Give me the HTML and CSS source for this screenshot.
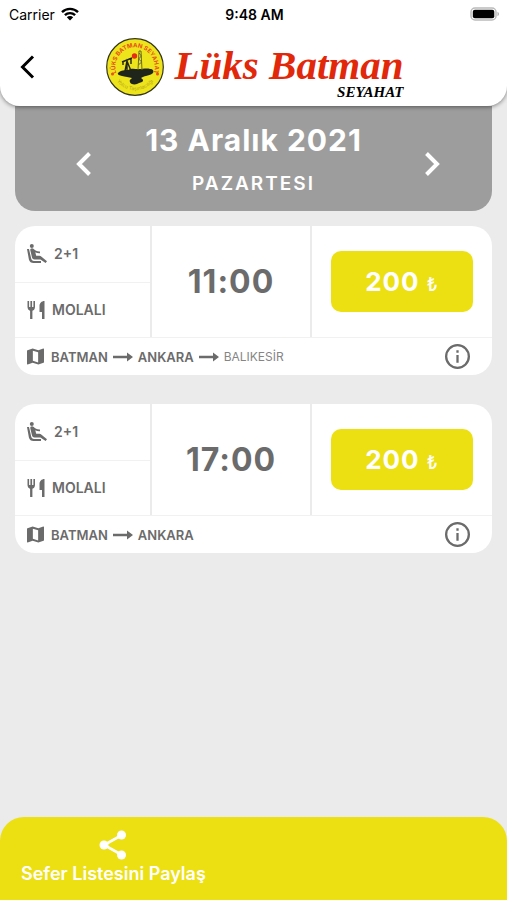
FILE: index.html
```html
<!DOCTYPE html>
<html lang="tr">
<head>
  <meta charset="UTF-8">
  <meta name="viewport" content="width=device-width, initial-scale=1.0">
  <title>Lüks Batman Seyahat</title>
  <link rel="stylesheet" href="styles.css">
</head>
<body>
<!-- shared icons -->
<svg class="sprite" aria-hidden="true">
  <symbol id="seat" viewBox="0 0 20 20">
    <circle cx="4.800" cy="2" r="2"/>
    <path d="M0 5h2l2.200 9.500c.3 1.500 1.300 2.400 2.800 2.400h7V19H6.500c-2.300 0-4-1.300-4.600-3.600z"/>
    <path d="M3.300 6.200c-.2-1 .6-1.900 1.700-1.900.7 0 1.200.3 1.700.8 1.500 1.600 3.300 2.400 6.300 2.300v1.900c-1.900.1-3.500-.3-4.700-1l.9 3.500h3.300c.7 0 1.200.2 1.700.6l5.800 4.900-1.400 1.600-5.200-3.500H7.500c-1.200 0-2.200-.8-2.500-2z"/>
  </symbol>
  <symbol id="meal" viewBox="0 0 18 20">
    <path d="M0 1h1.600v6h1.300V1h1.700v6h1.300V1h1.600v6c0 2-1.100 3.300-2.600 3.700V19H2.600v-8.300C1.100 10.300 0 9 0 7z"/>
    <path d="M17 1v18h-2.500v-7H12V6c0-2.700 2-5 5-5z"/>
  </symbol>
  <symbol id="map" viewBox="0 0 18 18">
    <path fill-rule="evenodd" d="M17.300.6L12 2.400 6 .6.500 2.300C.2 2.400 0 2.600 0 2.900v14c0 .4.300.6.700.5L6 15.600l6 1.800 5.500-1.700c.3-.1.500-.3.500-.6v-14c0-.4-.3-.6-.7-.5zM11.800 15.300l-5.600-1.700V2.800l5.600 1.700z"/>
  </symbol>
  <symbol id="arrow" viewBox="0 0 20 10">
    <path d="M0 3.800h14V.5L20 5l-6 4.500V6.200H0z"/>
  </symbol>
  <symbol id="info" viewBox="0 0 24 24">
    <circle cx="12" cy="12" r="10.900" fill="none" stroke="currentColor" stroke-width="2.200"/>
    <path d="M10.900 10.500h2.200V18h-2.200zM10.900 6h2.200v2.300h-2.200z"/>
  </symbol>
</svg>

<header class="header">
  <div class="status">
    <div class="carrier">
      <span>Carrier</span>
      <svg class="wifi" viewBox="0 0 18 14">
        <path d="M1 5.200a11.400 11.400 0 0 1 16 0M3.900 8.200a7.300 7.300 0 0 1 10.200 0" fill="none" stroke="#000" stroke-width="2.400"/>
        <path d="M9 13.500l-3.200-3.200a4.600 4.600 0 0 1 6.400 0z"/>
      </svg>
    </div>
    <span class="clock">9:48 AM</span>
    <svg class="battery" viewBox="0 0 30 14">
      <rect x="1" y="1" width="25" height="12" rx="4" fill="#fff" stroke="#bbb" stroke-width="1.500"/>
      <rect x="2.800" y="2.800" width="21.500" height="8.400" rx="2"/>
      <path d="M27.500 4.800c2 .8 2 3.600 0 4.400z" fill="#aaa"/>
    </svg>
  </div>
  <div class="topbar">
    <button class="back" type="button" aria-label="Geri">
      <svg viewBox="0 0 14 24"><path d="M12.500 1.500L2 12l10.500 10.500" fill="none" stroke="#000" stroke-width="3"/></svg>
    </button>
    <div class="logo">
      <svg class="badge" viewBox="0 0 58 58">
        <defs>
          <path id="ring-top" d="M10.350 35A19.600 19.600 0 1 1 47.650 35"/>
          <path id="ring-bottom" d="M8 39A23.300 23.300 0 0 0 50 39"/>
        </defs>
        <circle cx="29" cy="29" r="28.300" fill="#eee41c" stroke="#34351c" stroke-width="1.200"/>
        <text class="ring-name"><textPath href="#ring-top" startOffset="50%">LÜKS BATMAN SEYAHAT</textPath></text>
        <text class="ring-small"><textPath href="#ring-bottom" startOffset="50%">Yolcu Taşımacılığı</textPath></text>
        <circle cx="6.500" cy="36" r="1.500" fill="#e8501c"/>
        <circle cx="51.500" cy="36" r="1.500" fill="#e8501c"/>
        <path d="M12 35c3-3 7-3 10-3 3-2 7-1 10-1 5 0 9-1 12 0 3 0 4 2 3 4-2 2-5 2-7 3-2 0-3 1-5 2 2 1 3 3 1 4s-4 1-5 2c-3 1-7 0-7-2-1-2 1-3 2-4-3-1-7-1-10-2-2-1-5-1-4-3z" fill="#20251b"/>
        <path d="M19 33l2-10 4 10M16 24l10-4M25 20v6M17 24v3M21 23v9" fill="none" stroke="#20251b" stroke-width="1.400"/>
        <path d="M32 32l1-19h2l1 19M32.300 27l3.400-3-3-3 2.600-3-2.200-3" fill="none" stroke="#696c25" stroke-width="1"/>
        <circle cx="28.500" cy="18" r="2.700" fill="#e72c1a"/>
      </svg>
      <div class="brand">
        <span class="brand-name">Lüks Batman</span>
        <span class="brand-sub">SEYAHAT</span>
      </div>
    </div>
  </div>
</header>

<main class="content">
  <section class="date">
    <button type="button" aria-label="Önceki gün">
      <svg viewBox="0 0 16 24"><path d="M13.500 1.500L3 12l10.500 10.500" fill="none" stroke="#fff" stroke-width="4"/></svg>
    </button>
    <div class="date-text">
      <h1>13 Aralık 2021</h1>
      <p>PAZARTESI</p>
    </div>
    <button class="next" type="button" aria-label="Sonraki gün">
      <svg viewBox="0 0 16 24"><path d="M2.500 1.500L13 12 2.500 22.500" fill="none" stroke="#fff" stroke-width="4"/></svg>
    </button>
  </section>

  <article class="trip">
    <div class="trip-main">
      <div class="features">
        <div class="feature"><svg class="seat"><use href="#seat"/></svg><span>2+1</span></div>
        <div class="feature"><svg class="meal"><use href="#meal"/></svg><span>MOLALI</span></div>
      </div>
      <div class="time">11:00</div>
      <div class="price">
        <button type="button">200 <span>₺</span></button>
      </div>
    </div>
    <div class="route">
      <svg class="map"><use href="#map"/></svg>
      <strong>BATMAN</strong>
      <svg class="arrow"><use href="#arrow"/></svg>
      <strong>ANKARA</strong>
      <svg class="arrow"><use href="#arrow"/></svg>
      <span class="last-stop">BALIKESİR</span>
      <button class="info" type="button" aria-label="Bilgi"><svg><use href="#info"/></svg></button>
    </div>
  </article>

  <article class="trip">
    <div class="trip-main">
      <div class="features">
        <div class="feature"><svg class="seat"><use href="#seat"/></svg><span>2+1</span></div>
        <div class="feature"><svg class="meal"><use href="#meal"/></svg><span>MOLALI</span></div>
      </div>
      <div class="time">17:00</div>
      <div class="price">
        <button type="button">200 <span>₺</span></button>
      </div>
    </div>
    <div class="route">
      <svg class="map"><use href="#map"/></svg>
      <strong>BATMAN</strong>
      <svg class="arrow"><use href="#arrow"/></svg>
      <strong>ANKARA</strong>
      <button class="info" type="button" aria-label="Bilgi"><svg><use href="#info"/></svg></button>
    </div>
  </article>
</main>

<footer class="footer">
  <button class="share" type="button">
    <svg viewBox="0 0 28 30">
      <path d="M23 5L5 15l18 10" fill="none" stroke="#fff" stroke-width="2.600"/>
      <circle cx="22.500" cy="5" r="4.500" fill="#fff"/>
      <circle cx="5" cy="15" r="4.500" fill="#fff"/>
      <circle cx="22.500" cy="25" r="4.500" fill="#fff"/>
    </svg>
    <span>Sefer Listesini Paylaş</span>
  </button>
</footer>
</body>
</html>
```
FILE: styles.css
```css
* {
  box-sizing: border-box;
}

body {
  display: flex;
  flex-direction: column;
  min-height: 100vh;
  margin: 0;
  background-color: #ebebeb;
  color: #6b6b6b;
  font-family: Inter, "Liberation Sans", sans-serif;
}

button {
  padding: 0;
  border: 0;
  background: none;
  color: inherit;
  font-family: inherit;
  cursor: pointer;
}

svg {
  display: block;
  flex-shrink: 0;
}

.sprite {
  position: absolute;
  width: 0;
  height: 0;
}

/* header */
.header {
  position: relative;
  z-index: 1;
  padding-bottom: 10px;
  background-color: #fff;
  border-radius: 0 0 20px 20px;
  box-shadow: 0 1px 4px rgba(0, 0, 0, 0.45);
}

.status {
  display: grid;
  grid-template-columns: 1fr auto 1fr;
  align-items: center;
  height: 28px;
  padding: 0 7px 0 9px;
  color: #000;
  font-size: 14px;
}

.carrier {
  display: flex;
  align-items: center;
  gap: 6px;
}

.wifi {
  width: 18px;
  height: 14px;
}

.clock {
  font-weight: 600;
}

.battery {
  justify-self: end;
  width: 30px;
  height: 14px;
}

.topbar {
  display: grid;
  grid-template-columns: 56px 1fr 54px;
  align-items: center;
  height: 68px;
  padding-top: 8px;
}

.back {
  padding-left: 20px;
}

.back svg {
  width: 15px;
  height: 24px;
}

.logo {
  display: flex;
  justify-content: center;
  align-items: center;
  gap: 11px;
}

.badge {
  width: 58px;
  height: 58px;
}

.ring-name,
.ring-small {
  fill: #e8501c;
  font-size: 6px;
  font-weight: 700;
  text-anchor: middle;
}

.ring-small {
  fill: #b5a51c;
  font-size: 5px;
  font-weight: 400;
}

.brand {
  display: flex;
  flex-direction: column;
  padding-top: 8px;
  font-family: "Liberation Serif", serif;
  font-style: italic;
  font-weight: 700;
}

.brand-name {
  color: #e2280a;
  font-size: 41px;
  line-height: 42px;
}

.brand-sub {
  align-self: flex-end;
  color: #000;
  font-size: 15px;
  line-height: 12px;
}

/* content */
.content {
  padding: 0 15px;
}

.date {
  display: grid;
  grid-template-columns: 1fr auto 1fr;
  align-items: center;
  height: 105px;
  padding-top: 10px;
  background-color: #9d9d9d;
  border-radius: 0 0 20px 20px;
  color: #fff;
  text-align: center;
}

.date button {
  padding-left: 61px;
}

.date .next {
  justify-self: end;
  padding: 0 52px 0 0;
}

.date svg {
  width: 16px;
  height: 24px;
}

.date-text {
  margin-bottom: 3px;
}

.date h1 {
  margin: 0;
  font-size: 30px;
  font-weight: 700;
  letter-spacing: 1px;
  line-height: 44px;
}

.date p {
  margin: 0;
  font-size: 19px;
  font-weight: 600;
  letter-spacing: 2px;
  line-height: 44px;
}

.trip {
  margin: 15px 0 29px;
  overflow: hidden;
  background-color: #fff;
  border-radius: 20px;
}

.trip + .trip {
  margin-top: 0;
}

.trip-main {
  display: grid;
  grid-template-columns: 137px 1fr 180px;
  height: 111px;
}

.features {
  display: grid;
  grid-template-rows: 1fr 1fr;
  border-right: 2px solid #ebebeb;
}

.feature {
  display: flex;
  align-items: center;
  gap: 7px;
  padding-left: 12px;
  font-size: 14px;
  font-weight: 600;
}

.feature + .feature {
  gap: 6px;
  border-top: 1px solid #f1f1f1;
}

.seat {
  width: 20px;
  height: 20px;
  fill: currentColor;
}

.meal {
  width: 19px;
  height: 20px;
  fill: currentColor;
}

.time {
  display: flex;
  justify-content: center;
  align-items: center;
  border-right: 2px solid #ebebeb;
  font-size: 32px;
  font-weight: 700;
  letter-spacing: 1px;
}

.price {
  display: flex;
  justify-content: center;
  align-items: center;
}

.price button {
  width: 142px;
  height: 61px;
  background-color: #ece013;
  border-radius: 10px;
  color: #fff;
  font-size: 26px;
  font-weight: 700;
  letter-spacing: 1px;
}

.price span {
  font-size: 18px;
  font-weight: 500;
}

.route {
  display: flex;
  align-items: center;
  gap: 5px;
  height: 38px;
  padding: 0 22px 0 12px;
  border-top: 1px solid #f1f1f1;
  font-size: 13px;
}

.route strong {
  font-weight: 600;
}

.map {
  width: 17px;
  height: 17px;
  margin-right: 2px;
  fill: currentColor;
}

.arrow {
  width: 20px;
  height: 10px;
  fill: currentColor;
}

.last-stop {
  color: #858585;
  font-size: 12px;
}

.info {
  margin-left: auto;
}

.info svg {
  width: 25px;
  height: 25px;
  fill: currentColor;
}

/* share bar */
.footer {
  margin-top: auto;
  padding: 13px 21px 14px;
  background-color: #ece013;
  border-radius: 24px 24px 0 0;
}

.share {
  display: flex;
  flex-direction: column;
  align-items: center;
  gap: 2px;
  color: #fff;
  font-size: 18px;
  font-weight: 600;
  line-height: 24px;
}

.share svg {
  width: 28px;
  height: 30px;
}
```
